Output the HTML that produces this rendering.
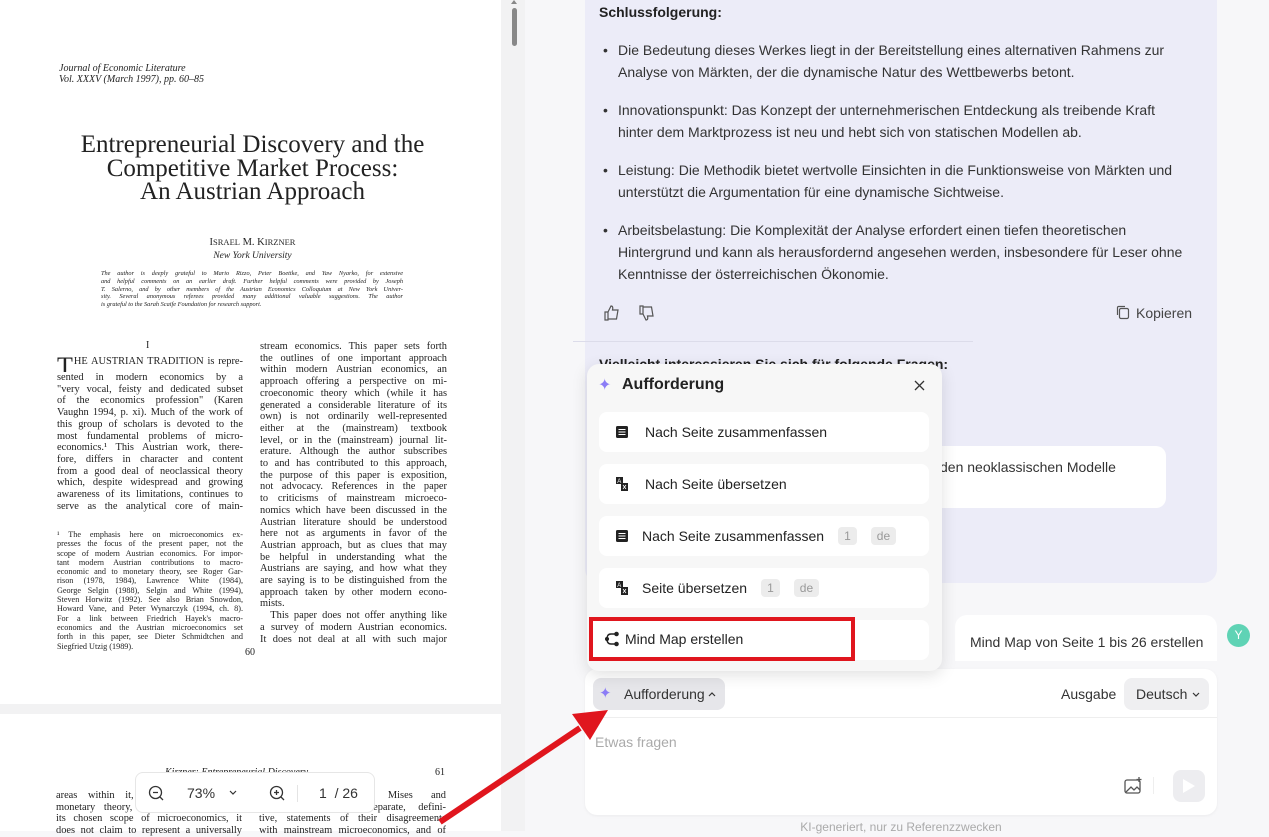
<!DOCTYPE html>
<html><head><meta charset="utf-8">
<style>
*{box-sizing:border-box;margin:0;padding:0}
body{width:1269px;height:831px;overflow:hidden;position:relative;background:#f7f7f9;font-family:"Liberation Sans",sans-serif;color:#222}
.abs{position:absolute}
.serif{font-family:"Liberation Serif",serif;color:#222}
.col{font-size:10.4px;line-height:11.7px;text-align:justify}
.col div{text-align:justify;text-align-last:justify;white-space:nowrap;overflow:hidden}
.fn{font-size:8.2px;line-height:9.3px}
.fn div{text-align:justify;text-align-last:justify;white-space:nowrap;overflow:hidden}
.item{position:absolute;left:599px;width:330px;height:40px;background:#fff;border-radius:8px;font-size:14px;color:#222;display:flex;align-items:center}
.tag{display:inline-block;background:#ececec;color:#999;border-radius:4px;font-size:12px;padding:2px 6px;margin-left:14px}
.ico{width:14px;height:14px;margin-left:16px;margin-right:16px}
</style></head><body>
<div class="abs" style="left:0;top:0;width:525px;height:831px;background:#f2f2f3"></div>
<div class="abs" style="left:0;top:0;width:501px;height:704px;background:#fff"></div>
<div class="abs" style="left:0;top:714px;width:501px;height:117px;background:#fff"></div>
<div class="abs" style="left:512px;top:8px;width:5px;height:38px;background:#888;border-radius:3px"></div>
<div class="abs" style="left:511px;top:0;width:0;height:0;border-left:3px solid transparent;border-right:3px solid transparent;border-bottom:4px solid #888"></div>

<div class="abs serif" style="left:59px;top:63px;font-size:10px;line-height:11px;font-style:italic">Journal of Economic Literature<br>Vol. XXXV (March 1997), pp. 60–85</div>
<div class="abs serif" style="left:40px;top:133px;width:425px;text-align:center;font-size:25px;line-height:23.5px">Entrepreneurial Discovery and the<br>Competitive Market Process:<br>An Austrian Approach</div>
<div class="abs serif" style="left:40px;top:236px;width:425px;text-align:center;font-size:10.5px;line-height:13px">I<span style="font-size:8.5px">SRAEL</span> M. K<span style="font-size:8.5px">IRZNER</span><br><i style="font-size:9.5px">New York University</i></div>
<div class="abs serif fn" style="left:101px;top:270px;width:302px;font-style:italic;font-size:6.3px;line-height:7.8px"><div>The author is deeply grateful to Mario Rizzo, Peter Boettke, and Yaw Nyarko, for extensive</div><div>and helpful comments on an earlier draft. Further helpful comments were provided by Joseph</div><div>T. Salerno, and by other members of the Austrian Economics Colloquium at New York Univer-</div><div>sity. Several anonymous referees provided many additional valuable suggestions. The author</div><div style="text-align-last:left">is grateful to the Sarah Scaife Foundation for research support.</div></div>
<div class="abs serif" style="left:146px;top:340px;font-size:10px">I</div>
<div class="abs serif col" style="left:57px;top:356px;width:186px">
<div><span style="font-size:26px;line-height:10px;float:left;margin-top:6px;margin-right:1px">T</span>HE AUSTRIAN TRADITION is repre-</div>
<div>sented in modern economics by a</div>
<div>"very vocal, feisty and dedicated subset</div>
<div>of the economics profession" (Karen</div>
<div>Vaughn 1994, p. xi). Much of the work of</div>
<div>this group of scholars is devoted to the</div>
<div>most fundamental problems of micro-</div>
<div>economics.¹ This Austrian work, there-</div>
<div>fore, differs in character and content</div>
<div>from a good deal of neoclassical theory</div>
<div>which, despite widespread and growing</div>
<div>awareness of its limitations, continues to</div>
<div>serve as the analytical core of main-</div>
</div>
<div class="abs serif fn" style="left:57px;top:530px;width:186px">
<div>¹ The emphasis here on microeconomics ex-</div><div>presses the focus of the present paper, not the</div><div>scope of modern Austrian economics. For impor-</div><div>tant modern Austrian contributions to macro-</div><div>economic and to monetary theory, see Roger Gar-</div><div>rison (1978, 1984), Lawrence White (1984),</div><div>George Selgin (1988), Selgin and White (1994),</div><div>Steven Horwitz (1992). See also Brian Snowdon,</div><div>Howard Vane, and Peter Wynarczyk (1994, ch. 8).</div><div>For a link between Friedrich Hayek's macro-</div><div>economics and the Austrian microeconomics set</div><div>forth in this paper, see Dieter Schmidtchen and</div><div style="text-align-last:left">Siegfried Utzig (1989).</div>
</div>
<div class="abs serif col" style="left:260px;top:341px;width:187px">
<div>stream economics. This paper sets forth</div><div>the outlines of one important approach</div><div>within modern Austrian economics, an</div><div>approach offering a perspective on mi-</div><div>croeconomic theory which (while it has</div><div>generated a considerable literature of its</div><div>own) is not ordinarily well-represented</div><div>either at the (mainstream) textbook</div><div>level, or in the (mainstream) journal lit-</div><div>erature. Although the author subscribes</div><div>to and has contributed to this approach,</div><div>the purpose of this paper is exposition,</div><div>not advocacy. References in the paper</div><div>to criticisms of mainstream microeco-</div><div>nomics which have been discussed in the</div><div>Austrian literature should be understood</div><div>here not as arguments in favor of the</div><div>Austrian approach, but as clues that may</div><div>be helpful in understanding what the</div><div>Austrians are saying, and how what they</div><div>are saying is to be distinguished from the</div><div>approach taken by other modern econo-</div><div style="text-align-last:left">mists.</div><div>&nbsp;&nbsp;This paper does not offer anything like</div><div>a survey of modern Austrian economics.</div><div>It does not deal at all with such major</div>
</div>
<div class="abs serif" style="left:245px;top:647px;font-size:10px">60</div>
<div class="abs serif" style="left:165px;top:767px;font-size:10px;font-style:italic">Kirzner: Entrepreneurial Discovery</div>
<div class="abs serif" style="left:435px;top:767px;font-size:10px">61</div>
<div class="abs serif col" style="left:56px;top:790px;width:186px"><div>areas within it, such as macro- or</div><div>monetary theory, or the theory of its</div><div>its chosen scope of microeconomics, it</div><div>does not claim to represent a universally</div></div>
<div class="abs serif col" style="left:259px;top:790px;width:187px"><div>views, though both Mises and</div><div>Hayek did provide separate, defini-</div><div>tive, statements of their disagreements</div><div>with mainstream microeconomics, and of</div></div>
<div class="abs" style="left:135px;top:772px;width:240px;height:41px;background:#fff;border:1px solid #e6e6e6;border-radius:8px;font-size:14px;color:#333">
<svg class="abs" style="left:12px;top:12px" width="16" height="16" viewBox="0 0 16 16" fill="none" stroke="#333" stroke-width="1.3"><circle cx="7.5" cy="7.5" r="6"/><path d="M5 7.5h5M12 12l3 3"/></svg>
<span class="abs" style="left:51px;top:12px">73%</span>
<svg class="abs" style="left:93px;top:17px" width="8" height="6" viewBox="0 0 8 6" fill="none" stroke="#333" stroke-width="1.2"><path d="M1 1l3 3 3-3"/></svg>
<svg class="abs" style="left:133px;top:12px" width="16" height="16" viewBox="0 0 16 16" fill="none" stroke="#333" stroke-width="1.3"><circle cx="7.5" cy="7.5" r="6"/><path d="M5 7.5h5M7.5 5v5M12 12l3 3"/></svg>
<div class="abs" style="left:161px;top:12px;width:1px;height:17px;background:#e4e4e4"></div>
<span class="abs" style="left:183px;top:12px">1&nbsp;&nbsp;/ 26</span>
</div>

<div class="abs" style="left:585px;top:0;width:632px;height:583px;background:#ececf8;border-radius:0 0 14px 14px"></div>
<div class="abs" style="left:599px;top:4px;font-size:14px;font-weight:bold;color:#222">Schlussfolgerung:</div>
<div class="abs" style="left:603px;top:39px;width:580px;font-size:14px;line-height:22px;color:#333">
<div style="position:relative;padding-left:15px;margin-bottom:16px"><span class="abs" style="left:0;top:0">•</span>Die Bedeutung dieses Werkes liegt in der Bereitstellung eines alternativen Rahmens zur Analyse von Märkten, der die dynamische Natur des Wettbewerbs betont.</div>
<div style="position:relative;padding-left:15px;margin-bottom:16px"><span class="abs" style="left:0;top:0">•</span>Innovationspunkt: Das Konzept der unternehmerischen Entdeckung als treibende Kraft hinter dem Marktprozess ist neu und hebt sich von statischen Modellen ab.</div>
<div style="position:relative;padding-left:15px;margin-bottom:16px"><span class="abs" style="left:0;top:0">•</span>Leistung: Die Methodik bietet wertvolle Einsichten in die Funktionsweise von Märkten und unterstützt die Argumentation für eine dynamische Sichtweise.</div>
<div style="position:relative;padding-left:15px"><span class="abs" style="left:0;top:0">•</span>Arbeitsbelastung: Die Komplexität der Analyse erfordert einen tiefen theoretischen Hintergrund und kann als herausfordernd angesehen werden, insbesondere für Leser ohne Kenntnisse der österreichischen Ökonomie.</div>
</div>
<svg class="abs" style="left:603px;top:304px" width="18" height="18" viewBox="0 0 18 18" fill="none" stroke="#555" stroke-width="1.2"><path d="M2 8h3v8H2zM5 8l3-6c2 0 2 2 1.5 4H15l-1.5 9H5"/></svg>
<svg class="abs" style="left:638px;top:304px" width="18" height="18" viewBox="0 0 18 18" fill="none" stroke="#555" stroke-width="1.2"><path d="M2 2h3v8H2zM5 10l3 6c2 0 2-2 1.5-4H15l-1.5-9H5"/></svg>
<svg class="abs" style="left:1116px;top:305px" width="15" height="15" viewBox="0 0 15 15" fill="none" stroke="#555" stroke-width="1.2"><rect x="3.5" y="3.5" width="9" height="10" rx="1.5"/><path d="M1.5 10V2.5a1 1 0 0 1 1-1H9"/></svg>
<div class="abs" style="left:1136px;top:305px;font-size:14px;color:#444">Kopieren</div>
<div class="abs" style="left:573px;top:341px;width:400px;height:1px;background:#dcdcea"></div>
<div class="abs" style="left:599px;top:356px;font-size:14px;font-weight:bold;color:#222">Vielleicht interessieren Sie sich für folgende Fragen:</div>
<div class="abs" style="left:880px;top:446px;width:286px;height:62px;background:#fff;border-radius:10px"></div>
<div class="abs" style="left:940px;top:459px;font-size:14px;color:#333">den neoklassischen Modelle</div>

<div class="abs" style="left:955px;top:615px;width:262px;height:46px;background:#fff;border-radius:12px 12px 0 0"></div>
<div class="abs" style="left:970px;top:634px;font-size:14px;color:#333">Mind Map von Seite 1 bis 26 erstellen</div>
<div class="abs" style="left:1227px;top:624px;width:23px;height:23px;border-radius:50%;background:#5fd3b5;color:#fff;font-size:12px;text-align:center;line-height:23px">Y</div>

<div class="abs" style="left:585px;top:669px;width:632px;height:146px;background:#fff;border-radius:12px;box-shadow:0 1px 3px rgba(0,0,0,.05)"></div>
<div class="abs" style="left:593px;top:678px;width:132px;height:32px;background:#e6e6ea;border-radius:8px"></div>
<div class="abs" style="left:599px;top:684px;color:#8b7cf6;font-size:15px">✦</div>
<div class="abs" style="left:624px;top:686px;font-size:14px;color:#333">Aufforderung</div>
<svg class="abs" style="left:708px;top:691px" width="8" height="6" viewBox="0 0 8 6" fill="none" stroke="#333" stroke-width="1.2"><path d="M1 5l3-3 3 3"/></svg>
<div class="abs" style="left:1061px;top:686px;font-size:14px;color:#333">Ausgabe</div>
<div class="abs" style="left:1124px;top:678px;width:85px;height:32px;background:#efeff1;border-radius:8px"></div>
<div class="abs" style="left:1136px;top:686px;font-size:14px;color:#333">Deutsch</div>
<svg class="abs" style="left:1192px;top:692px" width="8" height="6" viewBox="0 0 8 6" fill="none" stroke="#333" stroke-width="1.2"><path d="M1 1l3 3 3-3"/></svg>
<div class="abs" style="left:585px;top:717px;width:632px;height:1px;background:#eee"></div>
<div class="abs" style="left:595px;top:734px;font-size:14px;color:#aaa">Etwas fragen</div>
<svg class="abs" style="left:1124px;top:777px" width="19" height="18" viewBox="0 0 19 18" fill="none" stroke="#555" stroke-width="1.3"><rect x="1" y="3" width="15" height="13" rx="2"/><path d="M2 15l5-5 3 3 3-3 3 3M15 0v5M12.5 2.5h5"/></svg>
<div class="abs" style="left:1153px;top:777px;width:1px;height:17px;background:#eee"></div>
<div class="abs" style="left:1173px;top:770px;width:32px;height:32px;background:#ededf0;border-radius:8px"></div>
<div class="abs" style="left:1183px;top:779px;width:0;height:0;border-top:7px solid transparent;border-bottom:7px solid transparent;border-left:12px solid #fff"></div>
<div class="abs" style="left:585px;top:820px;width:632px;text-align:center;font-size:12px;color:#aaa">KI-generiert, nur zu Referenzzwecken</div>

<div class="abs" style="left:587px;top:364px;width:355px;height:307px;background:#f7f7f7;border-radius:12px;box-shadow:0 4px 16px rgba(0,0,0,.12)"></div>
<div class="abs" style="left:598px;top:375px;color:#8b7cf6;font-size:16px">✦</div>
<div class="abs" style="left:622px;top:376px;font-size:16px;font-weight:bold;color:#222">Aufforderung</div>
<svg class="abs" style="left:914px;top:380px" width="11" height="11" viewBox="0 0 11 11" stroke="#333" stroke-width="1.3"><path d="M1 1l9 9M10 1l-9 9"/></svg>
<svg width="0" height="0" style="position:absolute"><defs>
<g id="list"><rect x="1" y="1" width="12" height="12" rx="1.5" fill="#222"/><path d="M3.5 4.5h7M3.5 7h7M3.5 9.5h7" stroke="#fff" stroke-width="1"/></g>
<g id="tr"><rect x="1" y="0" width="7" height="7" fill="#222"/><rect x="6" y="6" width="7" height="8" fill="#222"/><text x="2.3" y="6" font-size="6" fill="#fff" font-family="Liberation Sans">A</text><path d="M8 8l3 4M11 8l-3 4" stroke="#fff" stroke-width=".8"/></g>
</defs></svg>
<div class="item" style="top:412px"><svg class="ico" viewBox="0 0 14 14"><use href="#list"/></svg>Nach Seite zusammenfassen</div>
<div class="item" style="top:464px"><svg class="ico" viewBox="0 0 14 14"><use href="#tr"/></svg>Nach Seite übersetzen</div>
<div class="item" style="top:516px"><svg class="ico" style="margin-right:13px" viewBox="0 0 14 14"><use href="#list"/></svg>Nach Seite zusammenfassen<span class="tag">1</span><span class="tag">de</span></div>
<div class="item" style="top:568px"><svg class="ico" style="margin-right:13px" viewBox="0 0 14 14"><use href="#tr"/></svg>Seite übersetzen<span class="tag">1</span><span class="tag">de</span></div>
<div class="item" style="top:620px"></div>
<div class="abs" style="left:589px;top:617px;width:266px;height:44px;border:4px solid #e0161e;background:#fff"></div>
<svg class="abs" style="left:605px;top:631px" width="14" height="16" viewBox="0 0 14 16" fill="none" stroke="#222" stroke-width="1.4"><path d="M11 3H6Q2 3 2 8t4 5h5"/><circle cx="11.5" cy="3" r="1.6" fill="#222"/><circle cx="11.5" cy="13" r="1.6" fill="#222"/><circle cx="2" cy="8" r="1.4" fill="#222"/></svg>
<div class="abs" style="left:625px;top:631px;font-size:14px;color:#222">Mind Map erstellen</div>

<svg class="abs" style="left:0;top:0" width="1269" height="831"><line x1="440" y1="822" x2="580" y2="728" stroke="#e0161e" stroke-width="6"/><polygon points="608,710 572,714 590,740" fill="#e0161e"/></svg>
</body></html>
